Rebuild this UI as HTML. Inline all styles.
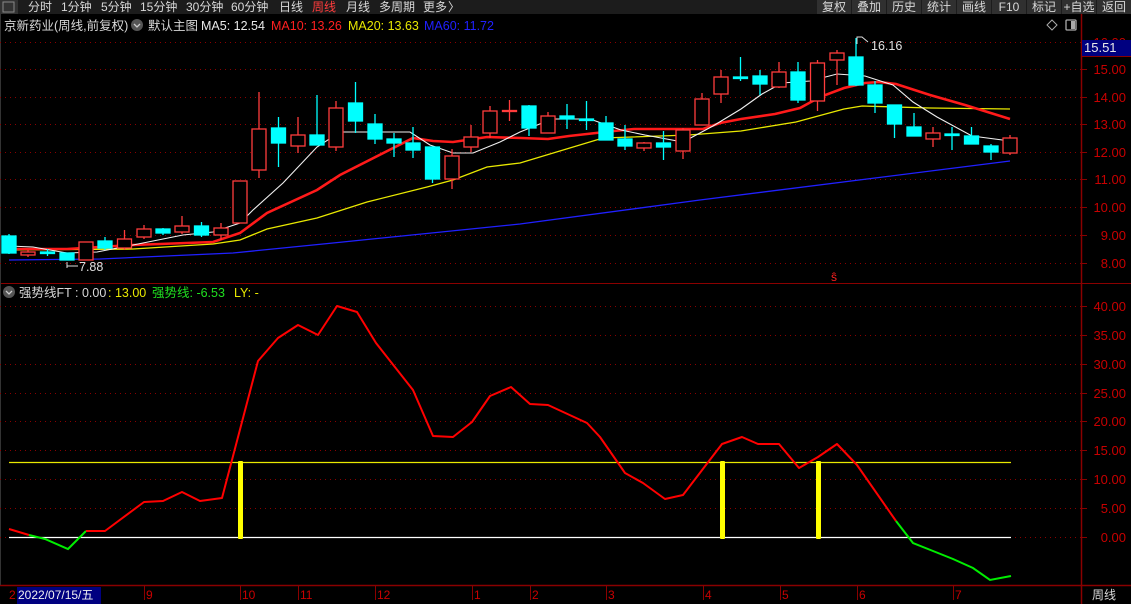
<!DOCTYPE html>
<html><head><meta charset="utf-8"><style>
html,body{margin:0;padding:0;background:#000;width:1131px;height:604px;overflow:hidden;font-family:"Liberation Sans","Noto Sans CJK SC",sans-serif;}
svg{display:block}
</style></head><body>
<svg width="1131" height="604" viewBox="0 0 1131 604" xmlns="http://www.w3.org/2000/svg" font-family="Liberation Sans, Noto Sans CJK SC, sans-serif">
<rect width="1131" height="604" fill="#000"/>
<!-- toolbar -->
<rect x="0" y="0" width="1131" height="14" fill="#1c1c1c"/>
<rect x="0" y="0" width="18" height="14" fill="#333"/>
<rect x="3" y="2" width="11" height="10" fill="none" stroke="#888" stroke-width="1"/>
<g font-size="12" fill="#d8d8d8">
<text x="28" y="11">分时</text><text x="61" y="11">1分钟</text><text x="101" y="11">5分钟</text><text x="140" y="11">15分钟</text><text x="186" y="11">30分钟</text><text x="231" y="11">60分钟</text><text x="279" y="11">日线</text><text x="312" y="11" fill="#ff3c3c">周线</text><text x="346" y="11">月线</text><text x="379" y="11">多周期</text><text x="423" y="11">更多</text><text x="448" y="11">〉</text>
</g>
<g fill="#303030">
<rect x="817" y="0" width="34" height="14"/><rect x="852" y="0" width="34" height="14"/><rect x="887" y="0" width="34" height="14"/><rect x="922" y="0" width="34" height="14"/><rect x="957" y="0" width="34" height="14"/><rect x="992" y="0" width="34" height="14"/><rect x="1027" y="0" width="34" height="14"/><rect x="1062" y="0" width="34" height="14"/><rect x="1097" y="0" width="34" height="14"/>
</g>
<g font-size="12" fill="#d8d8d8" text-anchor="middle">
<text x="834" y="11">复权</text><text x="869" y="11">叠加</text><text x="904" y="11">历史</text><text x="939" y="11">统计</text><text x="974" y="11">画线</text><text x="1009" y="11">F10</text><text x="1044" y="11">标记</text><text x="1079" y="11">+自选</text><text x="1114" y="11">返回</text>
</g>
<!-- info line -->
<g font-size="12.5">
<text x="4" y="30" fill="#d8d8d8">京新药业(周线,前复权)</text>
<circle cx="137" cy="25" r="6" fill="#555"/><path d="M134 24 L137 27 L140 24" stroke="#ccc" stroke-width="1.3" fill="none"/>
<text x="148" y="30" fill="#d8d8d8">默认主图</text>
<text x="201" y="30" fill="#e8e8e8">MA5: 12.54</text>
<text x="271" y="30" fill="#ff2020">MA10: 13.26</text>
<text x="348" y="30" fill="#e8e800">MA20: 13.63</text>
<text x="424" y="30" fill="#2020ff">MA60: 11.72</text>
</g>
<path d="M1052 20 L1057 25 L1052 30 L1047 25 Z" fill="none" stroke="#aaa"/>
<rect x="1066" y="20" width="10" height="10" rx="1" fill="none" stroke="#aaa" stroke-width="1.3"/><rect x="1071" y="21" width="4" height="8" fill="#aaa"/>
<!-- axes -->
<line x1="1081.5" y1="14" x2="1081.5" y2="604" stroke="#8a0000" stroke-width="1.5"/>
<line x1="0" y1="283.5" x2="1131" y2="283.5" stroke="#8a0000"/>
<line x1="0" y1="585.5" x2="1131" y2="585.5" stroke="#8a0000" stroke-width="1.5"/>
<line x1="0.5" y1="14" x2="0.5" y2="585" stroke="#333"/>
<!-- grid main -->
<g stroke="#8a0000" stroke-dasharray="1 4" stroke-width="1">
<line x1="0" y1="42.5" x2="1081" y2="42.5"/><line x1="0" y1="69.5" x2="1081" y2="69.5"/><line x1="0" y1="97.5" x2="1081" y2="97.5"/><line x1="0" y1="124.5" x2="1081" y2="124.5"/><line x1="0" y1="152.5" x2="1081" y2="152.5"/><line x1="0" y1="179.5" x2="1081" y2="179.5"/><line x1="0" y1="207.5" x2="1081" y2="207.5"/><line x1="0" y1="235.5" x2="1081" y2="235.5"/><line x1="0" y1="263.5" x2="1081" y2="263.5"/>
<line x1="0" y1="306.5" x2="1081" y2="306.5"/><line x1="0" y1="335.5" x2="1081" y2="335.5"/><line x1="0" y1="364.5" x2="1081" y2="364.5"/><line x1="0" y1="393.5" x2="1081" y2="393.5"/><line x1="0" y1="421.5" x2="1081" y2="421.5"/><line x1="0" y1="450.5" x2="1081" y2="450.5"/><line x1="0" y1="479.5" x2="1081" y2="479.5"/><line x1="0" y1="508.5" x2="1081" y2="508.5"/><line x1="0" y1="537.5" x2="1081" y2="537.5"/>
</g>
<g stroke="#8a0000">
<line x1="1081" y1="42.5" x2="1087" y2="42.5"/><line x1="1081" y1="69.5" x2="1087" y2="69.5"/><line x1="1081" y1="97.5" x2="1087" y2="97.5"/><line x1="1081" y1="124.5" x2="1087" y2="124.5"/><line x1="1081" y1="152.5" x2="1087" y2="152.5"/><line x1="1081" y1="179.5" x2="1087" y2="179.5"/><line x1="1081" y1="207.5" x2="1087" y2="207.5"/><line x1="1081" y1="235.5" x2="1087" y2="235.5"/><line x1="1081" y1="263.5" x2="1087" y2="263.5"/>
<line x1="1081" y1="306.5" x2="1087" y2="306.5"/><line x1="1081" y1="335.5" x2="1087" y2="335.5"/><line x1="1081" y1="364.5" x2="1087" y2="364.5"/><line x1="1081" y1="393.5" x2="1087" y2="393.5"/><line x1="1081" y1="421.5" x2="1087" y2="421.5"/><line x1="1081" y1="450.5" x2="1087" y2="450.5"/><line x1="1081" y1="479.5" x2="1087" y2="479.5"/><line x1="1081" y1="508.5" x2="1087" y2="508.5"/><line x1="1081" y1="537.5" x2="1087" y2="537.5"/>
</g>
<g font-size="13" fill="#c80000" text-anchor="end">
<text x="1126" y="47">16.00</text><text x="1126" y="74">15.00</text><text x="1126" y="102">14.00</text><text x="1126" y="129">13.00</text><text x="1126" y="157">12.00</text><text x="1126" y="184">11.00</text><text x="1126" y="212">10.00</text><text x="1126" y="240">9.00</text><text x="1126" y="268">8.00</text>
<text x="1126" y="311">40.00</text><text x="1126" y="340">35.00</text><text x="1126" y="369">30.00</text><text x="1126" y="398">25.00</text><text x="1126" y="426">20.00</text><text x="1126" y="455">15.00</text><text x="1126" y="484">10.00</text><text x="1126" y="513">5.00</text><text x="1126" y="542">0.00</text>
</g>
<rect x="1082" y="40" width="49" height="16" fill="#000080"/>
<line x1="1082" y1="56.5" x2="1131" y2="56.5" stroke="#8a0000"/>
<text x="1084" y="52" font-size="13" fill="#e8e8e8">15.51</text>
<!-- MA lines -->
<polyline fill="none" stroke="#2020ff" stroke-width="1.3" points="9,260 100,259 233,253 333,243 520,224 700,200 1010,161"/>
<polyline fill="none" stroke="#e8e800" stroke-width="1.3" points="9,250 133,249 213,244 240,240 267,229 317,218 367,202 427,187 453,180 487,167 520,163 603,138 689,135 741,131 796,122 844,109 862,106 930,108 1010,109"/>
<polyline fill="none" stroke="#ff1a1a" stroke-width="2.6" points="9,249 67,249 133,245 213,242 240,233 267,213 317,190 340,175 413,138 433,141 453,142 487,137 521,138 548,139 569,136 614,131 634,129 703,129 720,123 741,119 775,114 800,108 820,97 844,88 865,83 879,82 896,84 930,95 965,105 1010,119"/>
<polyline fill="none" stroke="#f0f0f0" stroke-width="1.1" points="9,246 33,247 50,250 67,253 97,252 133,245 183,235 213,232 240,223 253,210 283,183 317,147 340,132 410,132 430,145 453,153 473,153 500,142 520,132 552,119 590,119 621,130 645,135 683,142 713,126 741,109 762,94 782,83 810,81 837,74 865,76 893,85 913,102 937,117 972,136 1010,141"/>
<!-- candles -->
<g stroke-width="1.3">
<g stroke="#00ffff" fill="#00ffff">
<line x1="9" y1="234" x2="9" y2="254"/><rect x="2" y="236" width="14" height="17"/>
<line x1="47.5" y1="249" x2="47.5" y2="256"/><rect x="40.5" y="252" width="14" height="1.5"/>
<line x1="67" y1="253" x2="67" y2="260"/><rect x="60" y="253" width="14" height="7"/>
<line x1="105" y1="237" x2="105" y2="250"/><rect x="98" y="241" width="14" height="7"/>
<line x1="163" y1="228" x2="163" y2="235"/><rect x="156" y="229" width="14" height="4"/>
<line x1="201.5" y1="222" x2="201.5" y2="237"/><rect x="194.5" y="226" width="14" height="9"/>
<line x1="278.5" y1="117" x2="278.5" y2="167"/><rect x="271.5" y="128" width="14" height="15"/>
<line x1="317" y1="95" x2="317" y2="145"/><rect x="310" y="135" width="14" height="10"/>
<line x1="355.5" y1="82" x2="355.5" y2="133"/><rect x="348.5" y="103" width="14" height="18"/>
<line x1="375" y1="114" x2="375" y2="144"/><rect x="368" y="124" width="14" height="15"/>
<line x1="394" y1="133" x2="394" y2="157"/><rect x="387" y="139" width="14" height="4"/>
<line x1="413" y1="127" x2="413" y2="158"/><rect x="406" y="143" width="14" height="7"/>
<line x1="432.5" y1="147" x2="432.5" y2="183"/><rect x="425.5" y="147" width="14" height="32"/>
<line x1="529" y1="105" x2="529" y2="136"/><rect x="522" y="106" width="14" height="22"/>
<line x1="567" y1="104" x2="567" y2="129"/><rect x="560" y="116" width="14" height="3"/>
<line x1="586.5" y1="101" x2="586.5" y2="130"/><rect x="579.5" y="119" width="14" height="1.5"/>
<line x1="606" y1="116" x2="606" y2="140"/><rect x="599" y="123" width="14" height="17"/>
<line x1="625" y1="125" x2="625" y2="150"/><rect x="618" y="139" width="14" height="7"/>
<line x1="663.5" y1="131" x2="663.5" y2="160"/><rect x="656.5" y="143" width="14" height="4"/>
<line x1="740.5" y1="57" x2="740.5" y2="81"/><rect x="733.5" y="77" width="14" height="1.5"/>
<line x1="760" y1="70" x2="760" y2="95"/><rect x="753" y="76" width="14" height="8"/>
<line x1="798" y1="62" x2="798" y2="103"/><rect x="791" y="72" width="14" height="28"/>
<line x1="856" y1="38" x2="856" y2="86"/><rect x="849" y="57" width="14" height="28"/>
<line x1="875" y1="81" x2="875" y2="113"/><rect x="868" y="85" width="14" height="18"/>
<line x1="894.5" y1="105" x2="894.5" y2="138"/><rect x="887.5" y="105" width="14" height="19"/>
<line x1="914" y1="113" x2="914" y2="136"/><rect x="907" y="127" width="14" height="9"/>
<line x1="952" y1="127" x2="952" y2="150"/><rect x="945" y="134" width="14" height="1.5"/>
<line x1="971.5" y1="127" x2="971.5" y2="144"/><rect x="964.5" y="136" width="14" height="8"/>
<line x1="991" y1="144" x2="991" y2="160"/><rect x="984" y="146" width="14" height="6"/>
</g>
<g stroke="#ff3c3c" fill="#000">
<line x1="28" y1="250" x2="28" y2="257"/><rect x="21" y="252" width="14" height="3"/>
<line x1="86" y1="242" x2="86" y2="260"/><rect x="79" y="242" width="14" height="18"/>
<line x1="124.5" y1="230" x2="124.5" y2="250"/><rect x="117.5" y="239" width="14" height="9"/>
<line x1="144" y1="225" x2="144" y2="239"/><rect x="137" y="229" width="14" height="8"/>
<line x1="182" y1="216" x2="182" y2="234"/><rect x="175" y="226" width="14" height="6"/>
<line x1="221" y1="223" x2="221" y2="240"/><rect x="214" y="228" width="14" height="7"/>
<line x1="240" y1="181" x2="240" y2="223"/><rect x="233" y="181" width="14" height="42"/>
<line x1="259" y1="92" x2="259" y2="178"/><rect x="252" y="129" width="14" height="41"/>
<line x1="298" y1="117" x2="298" y2="153"/><rect x="291" y="135" width="14" height="11"/>
<line x1="336" y1="101" x2="336" y2="151"/><rect x="329" y="108" width="14" height="39"/>
<line x1="452" y1="149" x2="452" y2="189"/><rect x="445" y="156" width="14" height="23"/>
<line x1="471" y1="125" x2="471" y2="152"/><rect x="464" y="137" width="14" height="10"/>
<line x1="490" y1="106" x2="490" y2="138"/><rect x="483" y="111" width="14" height="22"/>
<line x1="509.5" y1="100" x2="509.5" y2="121"/><rect x="502.5" y="110.5" width="14" height="1"/>
<line x1="548" y1="112" x2="548" y2="133"/><rect x="541" y="116" width="14" height="17"/>
<line x1="644" y1="142" x2="644" y2="151"/><rect x="637" y="143" width="14" height="5"/>
<line x1="683" y1="128" x2="683" y2="159"/><rect x="676" y="130" width="14" height="21"/>
<line x1="702" y1="93" x2="702" y2="125"/><rect x="695" y="99" width="14" height="26"/>
<line x1="721" y1="70" x2="721" y2="103"/><rect x="714" y="77" width="14" height="17"/>
<line x1="779" y1="62" x2="779" y2="88"/><rect x="772" y="72" width="14" height="15"/>
<line x1="817.5" y1="60" x2="817.5" y2="111"/><rect x="810.5" y="63" width="14" height="38"/>
<line x1="837" y1="50" x2="837" y2="85"/><rect x="830" y="53" width="14" height="7"/>
<line x1="933" y1="127" x2="933" y2="147"/><rect x="926" y="133" width="14" height="6"/>
<line x1="1010" y1="135" x2="1010" y2="155"/><rect x="1003" y="138" width="14" height="15"/>
</g>
</g>
<!-- markers -->
<path d="M857 44 L857 37 L862 37 L868 42" fill="none" stroke="#ddd" stroke-width="1"/>
<text x="871" y="50" font-size="12.5" fill="#e0e0e0">16.16</text>
<path d="M67 262 L67 268 M67 266 L78 266" stroke="#ddd" fill="none"/>
<text x="79" y="271" font-size="12.5" fill="#e0e0e0">7.88</text>
<text x="831" y="281" font-size="12" fill="#ff2020">ŝ</text>
<!-- indicator header -->
<circle cx="9" cy="292" r="6" fill="#555"/><path d="M6 291 L9 294 L12 291" stroke="#ccc" stroke-width="1.3" fill="none"/>
<g font-size="12.5">
<text x="19" y="297" fill="#d8d8d8">强势线FT : 0.00</text>
<text x="108" y="297" fill="#e8e800">: 13.00</text>
<text x="152" y="297" fill="#20e020">强势线: -6.53</text>
<text x="234" y="297" fill="#e8e800">LY: -</text>
</g>
<!-- indicator -->
<line x1="9" y1="462.5" x2="1011" y2="462.5" stroke="#e8e800" stroke-width="1.2"/>
<line x1="9" y1="537.5" x2="1011" y2="537.5" stroke="#fff" stroke-width="1.2"/>
<g fill="#ffff00"><rect x="238" y="461" width="5" height="78" rx="1"/><rect x="720" y="461" width="5" height="78" rx="1"/><rect x="816" y="461" width="5" height="78" rx="1"/></g>
<polyline fill="none" stroke="#ff0000" stroke-width="2" stroke-linejoin="round" points="9,529 29,535"/>
<polyline fill="none" stroke="#00ee00" stroke-width="2" points="29,535 45,539 68,549 86,531"/>
<polyline fill="none" stroke="#ff0000" stroke-width="2" stroke-linejoin="round" points="86,531 105,531 144,502 163,501 182,492 200,501 222,498 258,361 278,338 298,325 318,335 337,306 357,312 376,343 413,390 433,436 453,437 472,422 490,396 511,387 530,404 548,405 587,423 600,437 625,473 643,483 665,499 683,495 722,444 742,437 758,444 779,444 799,468 818,457 837,444 857,465 896,521"/>
<polyline fill="none" stroke="#00ee00" stroke-width="2" points="896,521 913,543 933,551 953,559 973,568 990,580 1011,576"/>
<!-- date axis -->
<g stroke="#8a0000"><line x1="144.5" y1="585" x2="144.5" y2="600"/><line x1="240.5" y1="585" x2="240.5" y2="600"/><line x1="298.5" y1="585" x2="298.5" y2="600"/><line x1="375.5" y1="585" x2="375.5" y2="600"/><line x1="472.5" y1="585" x2="472.5" y2="600"/><line x1="530.5" y1="585" x2="530.5" y2="600"/><line x1="606.5" y1="585" x2="606.5" y2="600"/><line x1="703.5" y1="585" x2="703.5" y2="600"/><line x1="780.5" y1="585" x2="780.5" y2="600"/><line x1="857.5" y1="585" x2="857.5" y2="600"/><line x1="953.5" y1="585" x2="953.5" y2="600"/></g>
<g font-size="12" fill="#c80000">
<text x="9" y="599">2</text><text x="146" y="599">9</text><text x="242" y="599">10</text><text x="300" y="599">11</text><text x="377" y="599">12</text><text x="474" y="599">1</text><text x="532" y="599">2</text><text x="608" y="599">3</text><text x="705" y="599">4</text><text x="782" y="599">5</text><text x="859" y="599">6</text><text x="955" y="599">7</text>
</g>
<rect x="17" y="587" width="84" height="17" fill="#000080"/>
<text x="18" y="599" font-size="12" fill="#f0f0f0">2022/07/15/五</text>
<text x="1092" y="599" font-size="12" fill="#d8d8d8">周线</text>
</svg>
</body></html>
